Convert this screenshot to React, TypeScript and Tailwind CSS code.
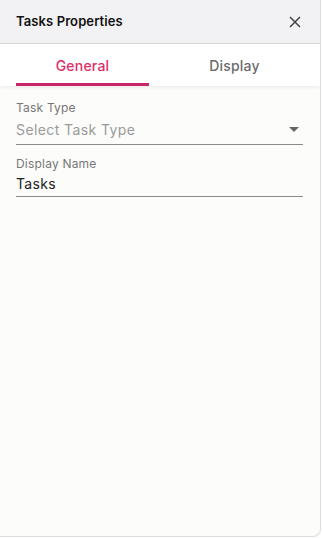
import React, { useState } from 'react';

const App: React.FC = () => {
  const [tab, setTab] = useState<'general' | 'display'>('general');

  return (
    <div className="w-[322px] h-[538px] bg-white overflow-hidden" style={{ fontFamily: 'Inter, "Noto Sans", sans-serif' }}>
      <div className="w-[321px] h-[537px] flex flex-col bg-[#fcfcfa] border-r border-b border-[#dcdcdc] rounded-br-lg overflow-hidden">
        {/* Header */}
        <div className="h-[44px] flex items-center justify-between pl-4 pr-[19px] pt-[1px] bg-[#f2f2f4] border-b border-[#d6d6d8]">
          <span className="text-[13px] font-semibold text-[#111] tracking-[0.1px]">Tasks Properties</span>
          <button className="text-[#444]">
            <svg width="12" height="12" viewBox="0 0 12 12" fill="none" stroke="currentColor" strokeWidth="1.5">
              <path d="M1 1l10 10M11 1L1 11" />
            </svg>
          </button>
        </div>

        {/* Tabs */}
        <div className="h-[42px] flex pl-4 bg-white shadow-[0_2px_3px_rgba(0,0,0,0.06)] relative z-10">
          <button
            onClick={() => setTab('general')}
            className={`w-[133px] flex items-center justify-center pt-[3px] text-[14px] font-medium tracking-[0.2px] border-b-[3px] ${tab === 'general' ? 'text-[#de2f6b] border-[#c8266a]' : 'text-[#6b6b6b] border-transparent'}`}
          >
            General
          </button>
          <button
            onClick={() => setTab('display')}
            className={`flex-1 flex items-center justify-center pt-[3px] text-[14px] font-medium tracking-[0.2px] border-b-[3px] ${tab === 'display' ? 'text-[#de2f6b] border-[#c8266a]' : 'text-[#6b6b6b] border-transparent'}`}
          >
            Display
          </button>
        </div>

        {/* Body */}
        <div className="flex flex-col gap-[12px] pl-4 pt-[15px] pr-[17px]">
          <div className="flex flex-col">
            <label className="text-[12px] text-[#777] leading-[14px] tracking-[0.2px]">Task Type</label>
            <div className="flex items-center justify-between h-[30px] border-b border-[#8a8a8a]">
              <span className="text-[14px] text-[#9a9a9a] tracking-[0.4px]">Select Task Type</span>
              <svg width="10" height="5" viewBox="0 0 10 5" className="mr-[4px]">
                <path d="M0 0h10L5 5z" fill="#666" />
              </svg>
            </div>
          </div>
          <div className="flex flex-col">
            <label className="text-[12px] text-[#777] leading-[14px] tracking-[0.2px]">Display Name</label>
            <div className="flex items-center h-[26px] border-b border-[#8a8a8a]">
              <span className="text-[14px] text-[#222] tracking-[0.3px]">Tasks</span>
            </div>
          </div>
        </div>
      </div>
    </div>
  );
};

export default App;
